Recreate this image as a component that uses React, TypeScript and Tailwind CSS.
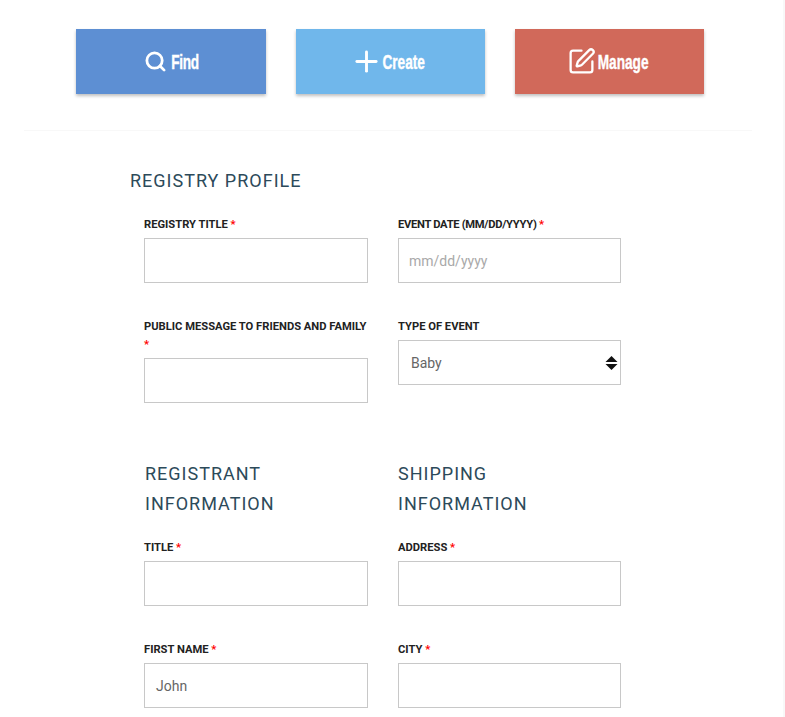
import React from "react";
import { Search, Plus, SquarePen } from "lucide-react";

const body = "font-['Roboto','Liberation_Sans',sans-serif]";

function Star() {
  return <span className="text-[#ff0000]">*</span>;
}

function Label({ text, star = true, tight = "", breakStar = false }: { text: string; star?: boolean; tight?: string; breakStar?: boolean }) {
  return (
    <label className={`block text-[11.2px] font-bold leading-[18px] text-[#222222] pt-[1px] mb-[4px] whitespace-nowrap ${tight}`}>
      {text} {breakStar && <br />}{star && <Star />}
    </label>
  );
}

function Box({ children }: { children?: React.ReactNode }) {
  return (
    <div className="h-[45px] border border-[#c8c8c8] bg-white flex items-center pt-[2px] text-[14px] text-[#666666] relative">
      {children}
    </div>
  );
}

function Field({ label, star = true, tight = "", breakStar = false, children }: { label: string; star?: boolean; tight?: string; breakStar?: boolean; children?: React.ReactNode }) {
  return (
    <div>
      <Label text={label} star={star} tight={tight} breakStar={breakStar} />
      <Box>{children}</Box>
    </div>
  );
}

function ActionButton({ bg, icon, text, width, textClass }: { bg: string; icon: React.ReactNode; text: string; width: string; textClass: string }) {
  return (
    <div className={`${bg} ${width} h-[65px] flex items-center justify-center text-white shadow-[0_2px_3px_rgba(0,0,0,0.25)]`}>
      {icon}
      <span className={`font-['Liberation_Sans',sans-serif] font-bold text-[21px] leading-none inline-block scale-x-[0.65] [-webkit-text-stroke:0.4px_white] ${textClass}`}>{text}</span>
    </div>
  );
}

function Heading({ children }: { children: React.ReactNode }) {
  return <h2 className="text-[18px] font-normal leading-[30px] tracking-[1px] text-[#2c4a5a]">{children}</h2>;
}

export default function App() {
  return (
    <div className={`${body} w-[785px] h-[717px] overflow-hidden bg-white relative`}>
      <div className="absolute right-0 top-0 bottom-0 w-[2px] bg-[#f8f8f8]" />
      <div className="flex gap-[30px] pl-[76px] pt-[29px]">
        <ActionButton bg="bg-[#5d8fd3]" width="w-[190px]" text="Find" textClass="ml-[-3px] mr-[-7px] tracking-[-0.6px]" icon={<Search size={23} strokeWidth={2.9} />} />
        <ActionButton bg="bg-[#70b7eb]" width="w-[189px]" text="Create" textClass="ml-[-12px] mr-[-5px]" icon={<Plus size={33} strokeWidth={2.1} />} />
        <ActionButton bg="bg-[#d1695a]" width="w-[189px]" text="Manage" textClass="ml-[-12px] mr-[-10px]" icon={<SquarePen size={29} strokeWidth={1.9} />} />
      </div>
      <div className="ml-[24px] w-[728px] mt-[36px] border-t border-[#f8f8f8]" />

      <div className="pl-[130px] pt-[35px]">
        <Heading>REGISTRY PROFILE</Heading>
      </div>

      <div className="pl-[144px] pt-[19px] grid grid-cols-[224px_223px] gap-x-[30px]">
        <Field label="REGISTRY TITLE" />
        <Field label="EVENT DATE (MM/DD/YYYY)" tight="tracking-[-0.3px]">
          <span className="pl-[10px] text-[#a9a9a9]">mm/dd/yyyy</span>
        </Field>

        <div className="mt-[34px]">
          <Field label="PUBLIC MESSAGE TO FRIENDS AND FAMILY" breakStar />
        </div>
        <div className="mt-[34px]">
          <Field label="TYPE OF EVENT" star={false}>
            <span className="pl-[12px]">Baby</span>
            <svg className="absolute right-[2px] top-[14px]" width="13" height="16" viewBox="0 0 13 16" fill="#111111">
              <path d="M6.5 1 L12.5 7 L0.5 7 Z" />
              <path d="M0.5 9 L12.5 9 L6.5 15 Z" />
            </svg>
          </Field>
        </div>

        <div className="mt-[56px] pl-[1px]">
          <Heading>REGISTRANT<br />INFORMATION</Heading>
        </div>
        <div className="mt-[56px]">
          <Heading>SHIPPING<br />INFORMATION</Heading>
        </div>

        <div className="mt-[19px]">
          <Field label="TITLE" />
        </div>
        <div className="mt-[19px]">
          <Field label="ADDRESS" />
        </div>

        <div className="mt-[34px]">
          <Field label="FIRST NAME">
            <span className="pl-[11px]">John</span>
          </Field>
        </div>
        <div className="mt-[34px]">
          <Field label="CITY" />
        </div>
      </div>
    </div>
  );
}
